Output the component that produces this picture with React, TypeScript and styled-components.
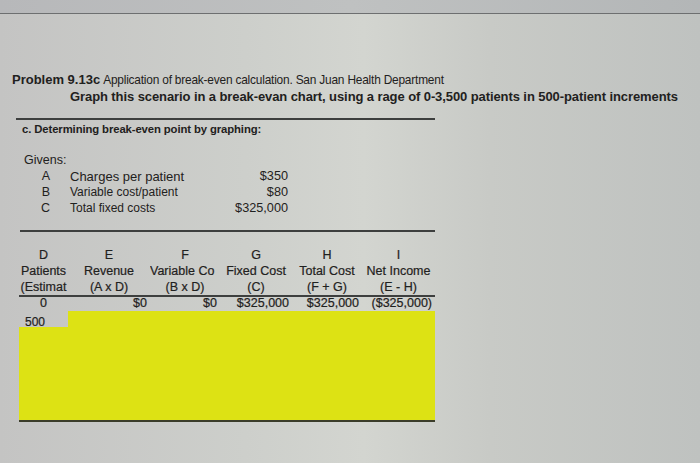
import React from 'react'
import { styled, createGlobalStyle } from 'styled-components'

const GlobalStyle = createGlobalStyle`
html, body { margin: 0; padding: 0; }
body { width: 700px; height: 463px; overflow: hidden; }
`

const givens = [
    { key: 'A', label: 'Charges per patient', value: '$350', small: false },
    { key: 'B', label: 'Variable cost/patient', value: '$80', small: true },
    { key: 'C', label: 'Total fixed costs', value: '$325,000', small: true },
]

const cols = [
    { letter: 'D', name: 'Patients', formula: '(Estimat', value: '0', align: 'center' },
    { letter: 'E', name: 'Revenue', formula: '(A x D)', value: '$0', align: 'right' },
    { letter: 'F', name: 'Variable Co', formula: '(B x D)', value: '$0', align: 'right' },
    { letter: 'G', name: 'Fixed Cost', formula: '(C)', value: '$325,000', align: 'right' },
    { letter: 'H', name: 'Total Cost', formula: '(F + G)', value: '$325,000', align: 'right' },
    { letter: 'I', name: 'Net Income', formula: '(E - H)', value: '($325,000)', align: 'right' },
]

const App = () => {
    return (
        <Page>
            <GlobalStyle />
            <TopStrip />
            <Sheet>
                <TitleLine>
                    <Strong>Problem 9.13c</Strong>
                    <Small>Application of break-even calculation. San Juan Health Department</Small>
                </TitleLine>
                <SubTitle>Graph this scenario in a break-evan chart, using a rage of 0-3,500 patients in 500-patient increments</SubTitle>
                <Rule top={13} />
                <Section>c. Determining break-even point by graphing:</Section>

                <GivensTitle>Givens:</GivensTitle>
                {givens.map((g) => (
                    <GivenRow key={g.key}>
                        <GivenKey>{g.key}</GivenKey>
                        <GivenLabel small={g.small}>{g.label}</GivenLabel>
                        <GivenValue>{g.value}</GivenValue>
                    </GivenRow>
                ))}
                <Rule top={14} left={20} />

                <Table>
                    {cols.map((c) => <Head key={c.letter}>{c.letter}</Head>)}
                    {cols.map((c) => <Head key={c.name} clip={c.letter === 'F'}>{c.name}</Head>)}
                    {cols.map((c) => <Head key={c.formula + c.letter}>{c.formula}</Head>)}
                    {cols.map((c) => <Cell key={'v' + c.letter} align={c.align}>{c.value}</Cell>)}
                    <Label>500</Label>
                    <Fill span={5} />
                    <Fill span={6} tall />
                </Table>
            </Sheet>
        </Page>
    )
}

export default App

const Page = styled.div`
width: 700px;
height: 463px;
overflow: hidden;
background: linear-gradient(90deg, #c4c4c3 0%, #cdcfcb 35%, #d3d5d0 52%, #c8cac6 70%, #bfc2c0 100%);
font-family: "Liberation Sans", Arial, sans-serif;
color: #1f2120;
`

const TopStrip = styled.div`
height: 13px;
background: linear-gradient(90deg, #b7b8ba 0%, #bfc1c1 50%, #b3b6b7 100%);
border-bottom: 1.5px solid #6d6f70;
`

const Sheet = styled.div`
padding: 58px 0 0 12px;
`

const TitleLine = styled.div`
display: flex;
align-items: baseline;
gap: 3px;
height: 17px;
white-space: nowrap;
`

const Strong = styled.span`
font-size: 13px;
font-weight: bold;
`

const Small = styled.span`
font-size: 11.9px;
letter-spacing: -0.2px;
`

const SubTitle = styled.div`
margin-left: 58px;
font-size: 13px;
font-weight: bold;
letter-spacing: -0.09px;
height: 16px;
white-space: nowrap;
`

const Rule = styled.div<{ top: number, left?: number }>`
margin-top: ${({ top }) => top}px;
margin-left: ${({ left }) => (left ?? 16) - 12}px;
width: ${({ left }) => 435 - (left ?? 16)}px;
height: 2px;
background: #3d3f3e;
`

const Section = styled.div`
margin: 3px 0 0 10px;
font-size: 11.3px;
font-weight: bold;
letter-spacing: -0.1px;
height: 14px;
`

const GivensTitle = styled.div`
margin: 16px 0 0 12px;
font-size: 12.5px;
height: 15px;
`

const GivenRow = styled.div`
display: grid;
grid-template-columns: 40px 130px 106px;
height: 16px;
align-items: center;
`

const GivenKey = styled.div`
text-align: right;
padding-right: 2px;
font-size: 12.5px;
`

const GivenLabel = styled.div<{ small: boolean }>`
padding-left: 18px;
font-size: ${({ small }) => small ? '12px' : '13px'};
white-space: nowrap;
`

const GivenValue = styled.div`
text-align: right;
font-size: 12.7px;
white-space: nowrap;
`

const Table = styled.div`
margin: 15px 0 0 7px;
width: 416px;
display: grid;
grid-template-columns: 49px 82px 70px 72px 70px 73px;
grid-auto-rows: 16px;
font-size: 12.5px;
-webkit-text-stroke: 0.2px #1f2120;
`

const Head = styled.div<{ clip?: boolean }>`
text-align: center;
white-space: nowrap;
overflow: ${({ clip }) => clip ? 'hidden' : 'visible'};
display: flex;
justify-content: ${({ clip }) => clip ? 'flex-start' : 'center'};
align-items: center;
`

const Cell = styled.div<{ align: string }>`
border-top: 2px solid #3d3f3e;
height: 14px;
line-height: 12px;
text-align: ${({ align }) => align};
padding-right: ${({ align }) => align === 'right' ? '3px' : '0'};
white-space: nowrap;
`

const Label = styled.div`
height: 22px;
line-height: 22px;
padding-left: 6px;
font-size: 12px;
`

const Fill = styled.div<{ span: number, tall?: boolean }>`
grid-column: span ${({ span }) => span};
height: ${({ tall }) => tall ? '93px' : '22px'};
background: #dde214;
border-bottom: ${({ tall }) => tall ? '2px solid #3b3d2a' : 'none'};
`
